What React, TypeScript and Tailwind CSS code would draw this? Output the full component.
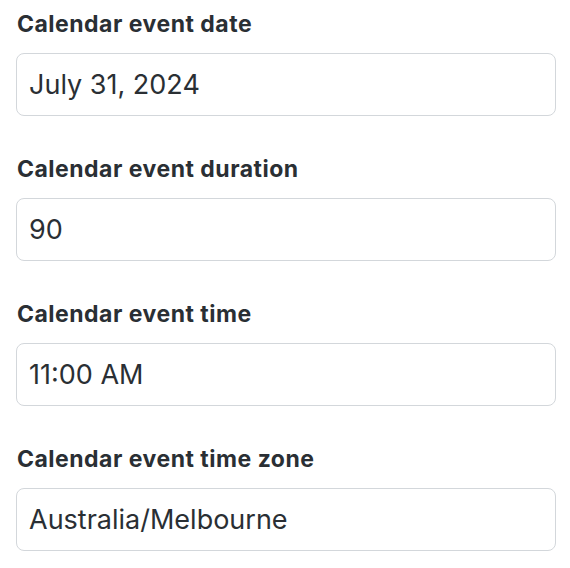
const fields = [
  { id: 'date', label: 'Calendar event date', value: 'July 31, 2024' },
  { id: 'duration', label: 'Calendar event duration', value: '90' },
  { id: 'time', label: 'Calendar event time', value: '11:00 AM' },
  { id: 'timezone', label: 'Calendar event time zone', value: 'Australia/Melbourne' },
];

export default function App() {
  return (
    <div className="min-h-screen bg-white pt-[8px] px-[16px] font-['Inter','Liberation_Sans',sans-serif] text-[#212529]">
      {fields.map((field) => (
        <div key={field.id} className="mb-[37px]">
          <label
            htmlFor={field.id}
            className="block pl-[1px] text-[23px] leading-[33px] font-bold tracking-[0.5px] text-[#2a2f34]"
          >
            {field.label}
          </label>
          <input
            id={field.id}
            readOnly
            value={field.value}
            className="mt-[12px] block w-[540px] h-[63px] px-[12px] text-[27px] text-[#2a2f34] bg-white border-[1.5px] border-[#d3d7db] rounded-[8px] outline-none"
          />
        </div>
      ))}
    </div>
  );
}
